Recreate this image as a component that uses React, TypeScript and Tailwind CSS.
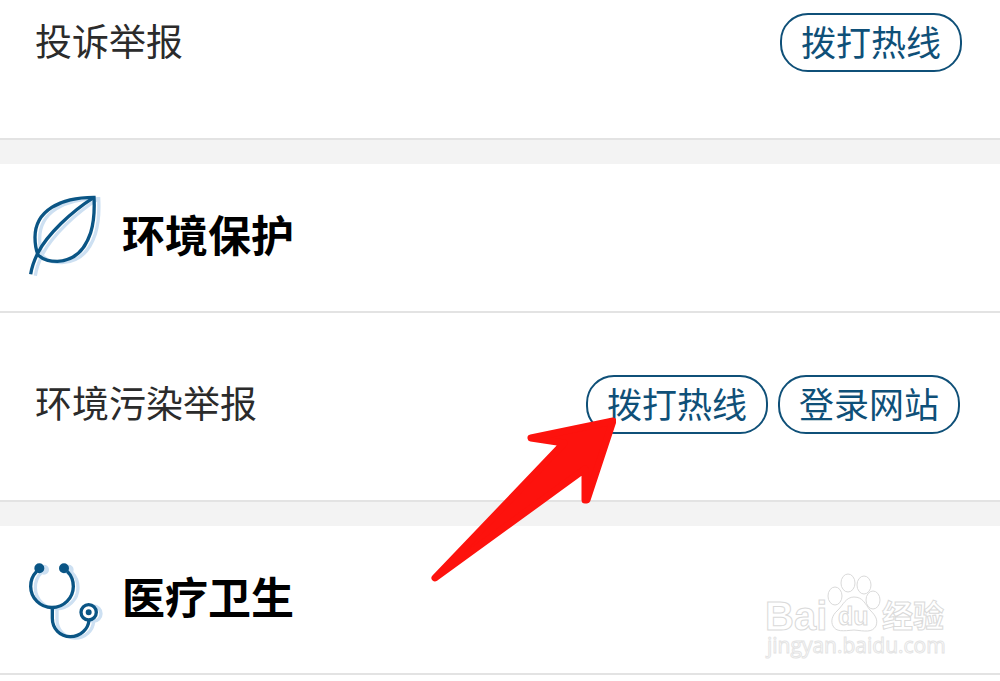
import { ReactNode } from 'react'

function LeafShape() {
  return (
    <>
      <path d="M252 52C150 52 75 92 75 172C75 194 78 210 84 225C104 243 122 244 142 244C196 242 226 206 242 158C252 126 254 90 252 52Z" />
      <path d="M252 52C182 96 112 164 84 218C72 242 65 262 62 283" />
    </>
  )
}

function LeafIcon() {
  return (
    <svg viewBox="42 48 240 252" className="h-[84px] w-20 overflow-visible" fill="none" strokeWidth="10" aria-hidden="true">
      <g className="stroke-[#cde0f2]" transform="translate(14 4)">
        <LeafShape />
      </g>
      <g className="stroke-[#0a5585]">
        <LeafShape />
      </g>
    </svg>
  )
}

function StethoscopeShape() {
  return (
    <>
      <path d="M80 92A64 64 0 1 0 172 92" fill="none" />
      <path d="M127 200V233C127 264 150 288 181 288C211 288 235 266 237 238" fill="none" />
      <circle cx="88" cy="83" r="10" />
      <circle cx="162" cy="83" r="10" />
      <circle cx="236" cy="215" r="23" fill="none" />
      <circle cx="236" cy="215" r="4" />
    </>
  )
}

function StethoscopeIcon() {
  return (
    <svg viewBox="42 52 240 252" className="h-[84px] w-20 overflow-visible" strokeWidth="10" aria-hidden="true">
      <g className="fill-[#cde0f2] stroke-[#cde0f2]" transform="translate(14 4)">
        <StethoscopeShape />
      </g>
      <circle cx="236" cy="215" r="23" className="fill-white" />
      <g className="fill-[#0a5585] stroke-[#0a5585]">
        <StethoscopeShape />
      </g>
    </svg>
  )
}

function Arrow() {
  return (
    <svg
      viewBox="0 0 186 168"
      className="pointer-events-none absolute right-[152px] top-10 z-10 h-[168px] w-[186px]"
      aria-hidden="true"
    >
      <path
        d="M183 6L101 23L134 28L5 163L155 54L155 85L157 85Z"
        fill="#fd120d"
        stroke="#fd120d"
        strokeWidth="7"
        strokeLinejoin="round"
      />
    </svg>
  )
}

function Watermark() {
  return (
    <svg
      viewBox="0 0 250 121"
      className="pointer-events-none absolute right-0 top-[34px] h-[121px] w-[250px]"
      fill="#ffffff"
      stroke="#dadada"
      strokeWidth="1"
      aria-hidden="true"
    >
      <text x="15" y="70" fontSize="40" fontWeight="700" fontFamily="Liberation Sans, sans-serif">
        Bai
      </text>
      <ellipse cx="85" cy="36" rx="7" ry="9" />
      <ellipse cx="98" cy="23" rx="7" ry="9" />
      <ellipse cx="114" cy="25" rx="7" ry="9" />
      <ellipse cx="123" cy="40" rx="7" ry="9" />
      <path d="M104 37C96 37 93 45 88 50C81 56 81 62 83 66C86 72 93 71 104 70C115 71 122 73 126 66C128 60 126 56 120 50C115 44 113 37 104 37Z" />
      <text x="88" y="65" fontSize="25" fontWeight="700" fontFamily="Liberation Sans, sans-serif">
        du
      </text>
      <text x="132" y="67" fontSize="31" fontWeight="700" fontFamily="Noto Sans CJK SC, sans-serif">
        经验
      </text>
      <text x="17" y="93" fontSize="21" fontFamily="Open Sans, sans-serif" stroke="#e4e4e4">
        jingyan.baidu.com
      </text>
    </svg>
  )
}

function PillButton({ children }: { children: ReactNode }) {
  return (
    <button
      type="button"
      className="h-[59px] w-[182px] rounded-[28px] border-2 border-[#0f5078] pb-1 text-[35px] leading-none text-[#0f5078]"
    >
      {children}
    </button>
  )
}

function SectionHeader({ icon, title }: { icon: ReactNode; title: string }) {
  return (
    <header className="flex h-[149px] items-center gap-[18px] border-b-2 border-[#e3e3e3] pl-6">
      {icon}
      <h2 className="pb-2 text-[43px] leading-none font-bold text-black">{title}</h2>
    </header>
  )
}

function ServiceRow({ label, className, children }: { label: string; className: string; children: ReactNode }) {
  return (
    <div className={`flex items-center justify-between border-b-2 border-[#e3e3e3] pb-[66px] pl-[35px] ${className}`}>
      <p className="pb-1 text-[37px] leading-none text-[#2b2b2b]">{label}</p>
      <div className="flex gap-[10px]">{children}</div>
    </div>
  )
}

export default function App() {
  return (
    <main className="min-h-screen bg-white font-['Noto_Sans_CJK_SC',sans-serif]">
      <section>
        <ServiceRow label="投诉举报" className="pt-[13px] pr-[38px]">
          <PillButton>拨打热线</PillButton>
        </ServiceRow>
        <div className="h-6 bg-[#f3f3f3]" />
      </section>

      <section>
        <SectionHeader icon={<LeafIcon />} title="环境保护" />
        <ServiceRow label="环境污染举报" className="pt-[62px] pr-10">
          <div className="relative">
            <PillButton>拨打热线</PillButton>
            <Arrow />
          </div>
          <PillButton>登录网站</PillButton>
        </ServiceRow>
        <div className="h-6 bg-[#f3f3f3]" />
      </section>

      <section className="relative">
        <SectionHeader icon={<StethoscopeIcon />} title="医疗卫生" />
        <Watermark />
      </section>
    </main>
  )
}
